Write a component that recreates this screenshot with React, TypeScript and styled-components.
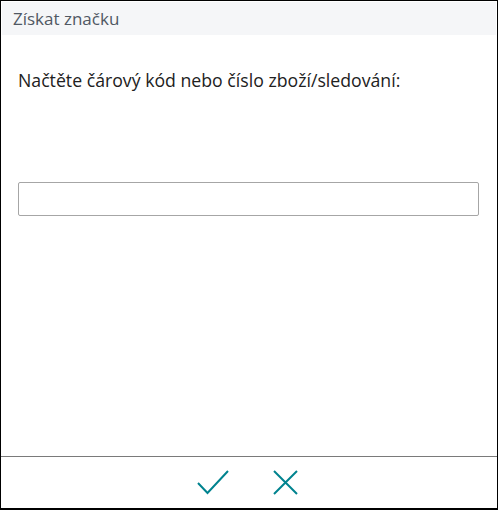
import styled, { createGlobalStyle } from 'styled-components'

const GlobalStyle = createGlobalStyle`
    html, body {
        margin: 0;
        padding: 0;
        background: #ffffff;
    }
    * {
        box-sizing: border-box;
    }
`

const Dialog = styled.div`
    width: 498px;
    height: 510px;
    border: 1px solid #000000;
    border-bottom-width: 2px;
    display: flex;
    flex-direction: column;
    background: #ffffff;
    font-family: 'Segoe UI', 'Open Sans', 'Noto Sans', sans-serif;
`

const Header = styled.div`
    margin: 1px 1px 0 1px;
    height: 33px;
    background: #f5f6f8;
    color: #505863;
    font-size: 17px;
    display: flex;
    align-items: center;
    padding-left: 11px;
`

const Body = styled.div`
    flex: 1;
    display: flex;
    flex-direction: column;
    padding: 33px 18px 0 17px;
`

const Label = styled.div`
    color: #212121;
    font-size: 17.7px;
    line-height: 24px;
`

const Input = styled.input`
    margin-top: 90px;
    width: 100%;
    height: 34px;
    border: 1px solid #a6a6a6;
    border-radius: 2px;
    outline: none;
    font: inherit;
    padding: 0 8px;
`

const Footer = styled.div`
    height: 52px;
    border-top: 1px solid #7a7a7a;
    display: flex;
    justify-content: center;
    align-items: center;
    gap: 40px;
`

const IconButton = styled.button`
    border: none;
    background: none;
    padding: 0;
    width: 32px;
    height: 30px;
    display: flex;
    align-items: center;
    justify-content: center;
    cursor: pointer;
`

const Check = () => (
    <svg width="32" height="25" viewBox="0 0 32 25">
        <path d="M1 13 L10.5 23 L31 1" fill="none" stroke="#00838f" strokeWidth="2" />
    </svg>
)

const Cross = () => (
    <svg width="25" height="25" viewBox="0 0 25 25">
        <path d="M1 1 L24 24 M24 1 L1 24" fill="none" stroke="#00838f" strokeWidth="2" />
    </svg>
)

const App = () => {
    return (
        <>
            <GlobalStyle />
            <Dialog>
                <Header>Získat značku</Header>
                <Body>
                    <Label>Načtěte čárový kód nebo číslo zboží/sledování:</Label>
                    <Input type="text" />
                </Body>
                <Footer>
                    <IconButton aria-label="OK">
                        <Check />
                    </IconButton>
                    <IconButton aria-label="Zrušit">
                        <Cross />
                    </IconButton>
                </Footer>
            </Dialog>
        </>
    )
}

export default App
